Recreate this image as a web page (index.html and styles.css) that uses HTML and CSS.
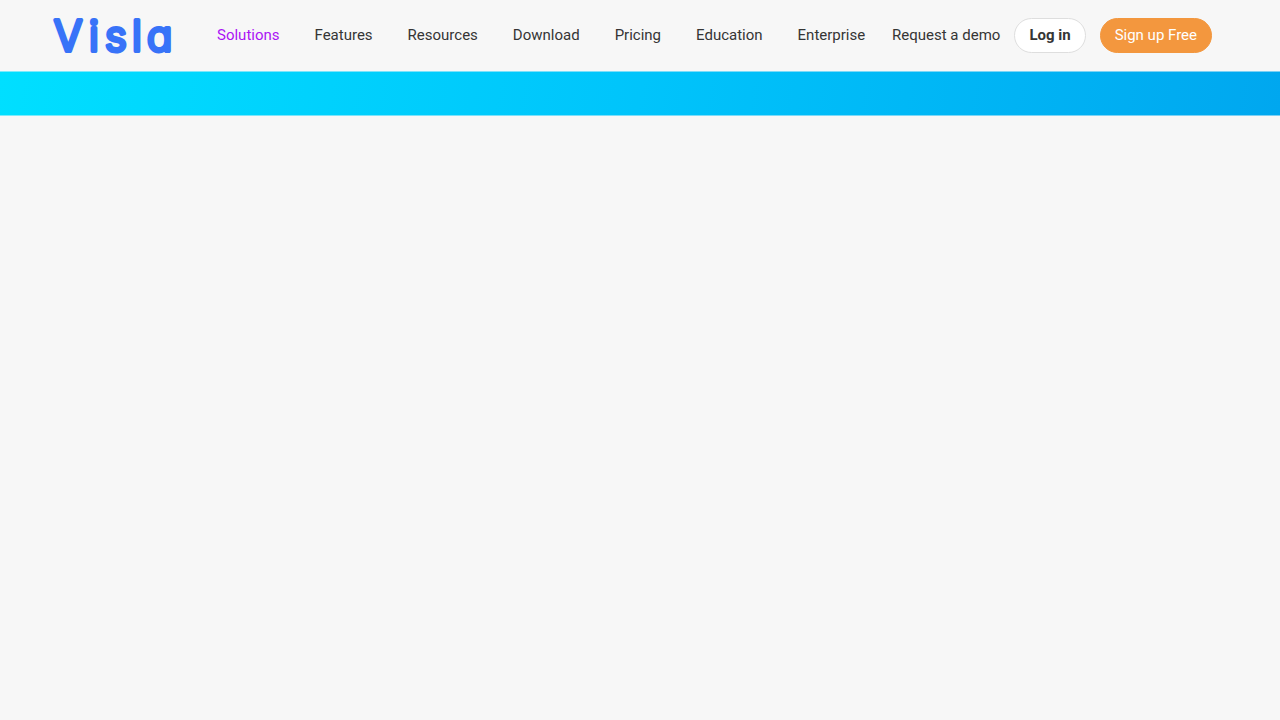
FILE: index.html
```html
<!DOCTYPE html>
<html lang="en">
<head>
  <meta charset="UTF-8">
  <meta name="viewport" content="width=device-width, initial-scale=1.0">
  <title>Visla</title>
  <link rel="stylesheet" href="styles.css">
</head>
<body>

<header class="header">
  <a class="logo" href="#">
    <svg width="122" height="37" viewBox="0 0 122 37" role="img" aria-label="Visla">
      <text class="logo-text" x="2 37 53 80 95" y="34">Visla</text>
    </svg>
  </a>

  <nav class="nav">
    <a class="nav-link active" href="#">Solutions</a>
    <a class="nav-link" href="#">Features</a>
    <a class="nav-link" href="#">Resources</a>
    <a class="nav-link" href="#">Download</a>
    <a class="nav-link" href="#">Pricing</a>
    <a class="nav-link" href="#">Education</a>
    <a class="nav-link" href="#">Enterprise</a>
  </nav>

  <div class="actions">
    <a class="nav-link" href="#">Request a demo</a>
    <button type="button" class="btn btn-login">Log in</button>
    <button type="button" class="btn btn-signup">Sign up Free</button>
  </div>
</header>

<div class="banner"></div>

</body>
</html>
```
FILE: styles.css
```css
* { box-sizing: border-box; }
body { margin: 0; font-family: Roboto, "Liberation Sans", sans-serif; font-size: 15px; color: #353535; background: #f7f7f7; }

.header { display: flex; align-items: center; padding: 17px 68px 17px 52px; }
.logo { display: block; margin-right: 43px; }
.logo svg { display: block; overflow: visible; }
.logo-text {
  font-family: Inter, sans-serif;
  font-size: 42px;
  font-weight: 300;
  font-feature-settings: "cv11";
  fill: #3873f8;
  stroke: #3873f8;
  stroke-width: 4px;
  stroke-linejoin: round;
}

.nav { display: flex; gap: 35px; }
.nav-link { padding-bottom: 2px; color: inherit; text-decoration: none; line-height: 20px; white-space: nowrap; }
.nav-link.active { color: #ab14f5; }

.actions { display: flex; align-items: center; gap: 14px; margin-left: auto; }
.btn { height: 35px; padding: 0 14px 2px; border: 1px solid transparent; border-radius: 18px; font: inherit; white-space: nowrap; cursor: pointer; }
.btn-login { background: #fff; border-color: #dedede; color: #353535; font-weight: 700; }
.btn-signup { background: #f3973e; border-color: #f3973e; color: #fff; }

.banner {
  height: 45px;
  background: linear-gradient(100deg, #00dfff 0%, #00c4fb 50%, #00a7ef 100%);
  border-top: 1px solid rgba(247, 247, 247, 0.5);
  border-bottom: 1px solid rgba(247, 247, 247, 0.5);
}
```
